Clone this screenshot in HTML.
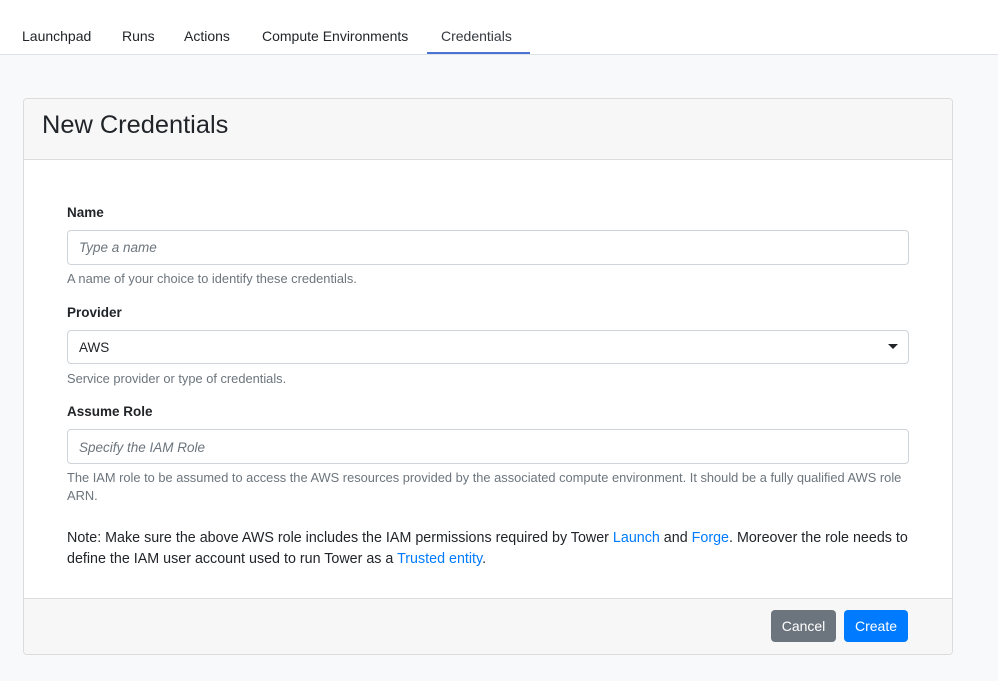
<!DOCTYPE html>
<html><head><style>
body{margin:0;width:998px;height:681px;background:#f8f9fa;font-family:"Liberation Sans",sans-serif;color:#212529;position:relative;overflow:hidden}
.a{position:absolute;white-space:nowrap}
.nav{position:absolute;left:0;top:0;width:998px;height:54px;background:#fff;border-bottom:1px solid #dee2e6}
.nav span{position:absolute;top:28px;font-size:14px;color:#212529}
.card{position:absolute;left:23px;top:98px;width:928px;height:555px;background:#fff;border:1px solid #dcdcdc;border-radius:4px;overflow:hidden}
.hd{position:absolute;left:0;top:0;width:100%;height:60px;background:#f7f7f7;border-bottom:1px solid #dcdcdc}
.ft{position:absolute;left:0;top:499px;width:100%;height:56px;background:#f7f7f7;border-top:1px solid #dcdcdc}
.lbl{font-size:13.5px;font-weight:bold}
.inp{position:absolute;left:67px;width:840px;background:#fff;border:1px solid #ced4da;border-radius:4px}
.ph{font-size:13.5px;font-style:italic;color:#6c757d}
.hlp{font-size:12.85px;color:#6c757d}
.note{font-size:14.3px}
a{color:#007bff;text-decoration:none}
.btn{position:absolute;top:610px;height:32px;border-radius:4px;color:#fff;font-size:14px;text-align:center;line-height:32px}
</style></head><body>
<div class="nav">
<span style="left:22px">Launchpad</span>
<span style="left:122px">Runs</span>
<span style="left:184px">Actions</span>
<span style="left:262px">Compute Environments</span>
<span style="left:441px;color:#343a40">Credentials</span>
<div style="position:absolute;left:427px;top:52px;width:103px;height:2px;background:#4a73d6"></div>
</div>
<div class="card"><div class="hd"></div><div class="ft"></div></div>
<div class="a" style="left:42px;top:111px;font-size:25.4px;color:#212529">New Credentials</div>
<div class="a lbl" style="left:67px;top:205px">Name</div>
<div class="inp" style="top:230px;height:33px"></div>
<div class="a ph" style="left:79px;top:240px">Type a name</div>
<div class="a hlp" style="left:67px;top:271px">A name of your choice to identify these credentials.</div>
<div class="a lbl" style="left:67px;top:305px">Provider</div>
<div class="inp" style="top:330px;height:32px"></div>
<div class="a" style="left:79px;top:340px;font-size:13.5px">AWS</div>
<div class="a" style="left:888px;top:344px;width:0;height:0;border-left:5px solid transparent;border-right:5px solid transparent;border-top:5px solid #212529"></div>
<div class="a hlp" style="left:67px;top:371px">Service provider or type of credentials.</div>
<div class="a lbl" style="left:67px;top:404px">Assume Role</div>
<div class="inp" style="top:429px;height:33px"></div>
<div class="a ph" style="left:79px;top:440px">Specify the IAM Role</div>
<div class="a hlp" style="left:67px;top:470px">The IAM role to be assumed to access the AWS resources provided by the associated compute environment. It should be a fully qualified AWS role</div>
<div class="a hlp" style="left:67px;top:488px">ARN.</div>
<div class="a note" style="left:67px;top:530px">Note: Make sure the above AWS role includes the IAM permissions required by Tower <a>Launch</a> and <a>Forge</a>. Moreover the role needs to</div>
<div class="a note" style="left:67px;top:551px">define the IAM user account used to run Tower as a <a>Trusted entity</a>.</div>
<div class="btn" style="left:771px;width:65px;background:#6c757d">Cancel</div>
<div class="btn" style="left:844px;width:64px;background:#007bff">Create</div>
</body></html>
